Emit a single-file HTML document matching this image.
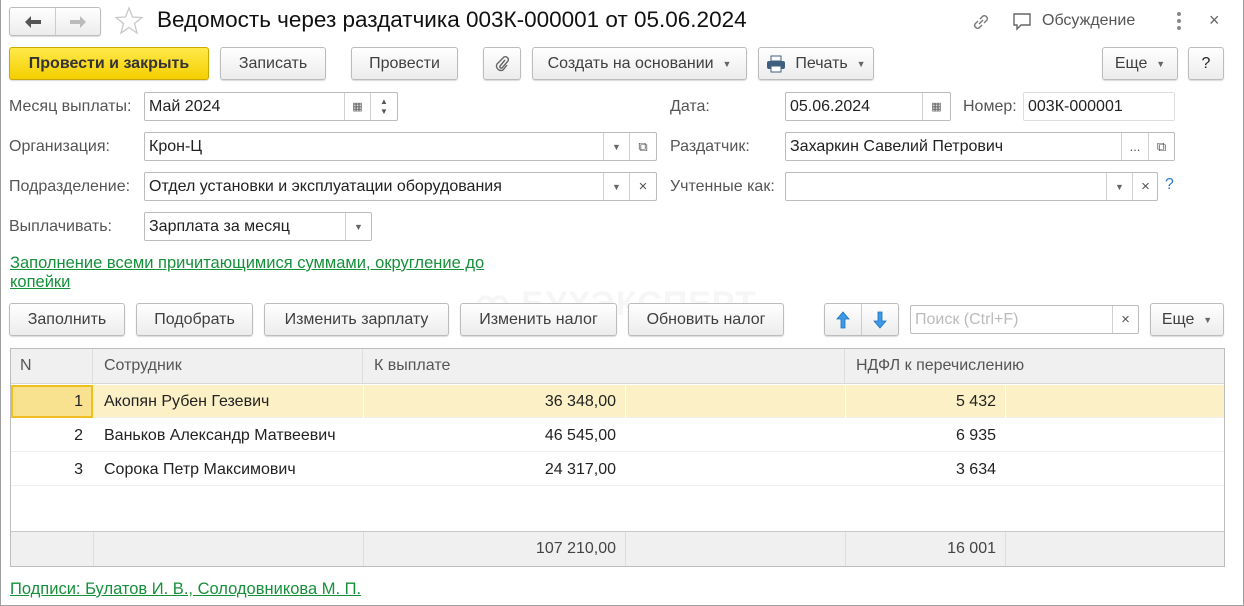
<!DOCTYPE html><html><head><meta charset="utf-8"><style>
*{box-sizing:border-box;margin:0;padding:0}
body{width:1244px;height:606px;background:#fff;font-family:"Liberation Sans",Arial,sans-serif;font-size:16px;color:#333;position:relative;overflow:hidden}
.frame{position:absolute;left:0;top:0;width:1244px;height:606px;border:1px solid #a0a0a0;border-top:none}
.a{position:absolute;white-space:nowrap}
.btn{position:absolute;height:33px;border:1px solid #bcbcbc;border-radius:3px;background:linear-gradient(#fff,#ececec);box-shadow:0 1px 1px rgba(0,0,0,.15);display:flex;align-items:center;justify-content:center;color:#404040;font-size:16px}
.inp{position:absolute;height:29px;border:1px solid #bcbcbc;border-radius:2px;background:#fff;display:flex;align-items:center;padding-left:4px;color:#222}
.seg{position:absolute;top:0;height:27px;border-left:1px solid #d0d0d0;display:flex;align-items:center;justify-content:center;font-size:11px;color:#555}
.lbl{position:absolute;color:#555}
.tri{font-size:9px;color:#666}
.link{position:absolute;color:#16903a;text-decoration:underline;font-size:16.5px}
.cell{position:absolute;height:34px;display:flex;align-items:center;border-right:1px solid #ddd}
</style></head><body>
<div class="frame"></div>
<!-- nav -->
<div class="btn" style="left:9px;top:7px;width:92px;height:29px;padding:0"><span style="width:46px;display:flex;justify-content:center"><svg width="18" height="14" viewBox="0 0 18 14"><path d="M1 7l6-6v4h10v4H7v4z" fill="#555"/></svg></span><span style="width:1px;height:27px;background:#ccc"></span><span style="width:45px;display:flex;justify-content:center"><svg width="18" height="14" viewBox="0 0 18 14"><path d="M17 7l-6-6v4H1v4h10v4z" fill="#bbb"/></svg></span></div>
<svg class="a" style="left:114px;top:6px" width="30" height="30" viewBox="0 0 30 30"><polygon points="15,2 18.5,11 28,11.5 20.5,17.5 23,27 15,21.5 7,27 9.5,17.5 2,11.5 11.5,11" fill="none" stroke="#c8c8c8" stroke-width="1.3"/></svg>
<div class="a" style="left:157px;top:7px;font-size:22.5px;color:#111">Ведомость через раздатчика 003К-000001 от 05.06.2024</div>
<svg class="a" style="left:970px;top:11px" width="22" height="22" viewBox="0 0 22 22" fill="none" stroke="#777" stroke-width="1.4"><path d="M9 13l4-4M8 10l-3 3a3 3 0 004 4l3-3M14 12l3-3a3 3 0 00-4-4l-3 3"/></svg>
<svg class="a" style="left:1012px;top:11px" width="22" height="22" viewBox="0 0 22 22" fill="none" stroke="#666" stroke-width="1.4"><path d="M2 3h16v11h-9l-4 4v-4H2z"/></svg>
<div class="a" style="left:1042px;top:12px;color:#555">Обсуждение</div>
<div class="a" style="left:1177px;top:12px;width:4px;height:18px;"><div style="width:4px;height:4px;background:#888;border-radius:2px;margin-bottom:3px"></div><div style="width:4px;height:4px;background:#888;border-radius:2px;margin-bottom:3px"></div><div style="width:4px;height:4px;background:#888;border-radius:2px"></div></div>
<div class="a" style="left:1209px;top:10px;color:#666;font-size:18px">×</div>
<!-- toolbar -->
<div class="btn" style="left:9px;top:47px;width:200px;background:linear-gradient(#ffe94a,#f4cf00);border-color:#c9a800;color:#333;font-weight:bold">Провести и закрыть</div>
<div class="btn" style="left:220px;top:47px;width:106px">Записать</div>
<div class="btn" style="left:351px;top:47px;width:107px">Провести</div>
<div class="btn" style="left:483px;top:47px;width:38px"><svg width="16" height="18" viewBox="0 0 16 18" fill="none" stroke="#666" stroke-width="1.4"><path d="M11 5l-5 6a1.5 1.5 0 002 2l6-7a3 3 0 00-4-4L3 9a4.5 4.5 0 006 6l4-5"/></svg></div>
<div class="btn" style="left:532px;top:47px;width:215px">Создать на основании&nbsp;&nbsp;<span class="tri">▼</span></div>
<div class="btn" style="left:758px;top:47px;width:116px"><svg width="20" height="18" viewBox="0 0 20 18"><rect x="5" y="1" width="10" height="5" fill="#fff" stroke="#3f5f80"/><rect x="1" y="6" width="18" height="8" rx="2" fill="#3f5f80"/><rect x="5" y="11" width="10" height="6" fill="#fff" stroke="#3f5f80"/></svg>&nbsp;&nbsp;Печать&nbsp;&nbsp;<span class="tri">▼</span></div>
<div class="btn" style="left:1102px;top:47px;width:76px">Еще&nbsp;&nbsp;<span class="tri">▼</span></div>
<div class="btn" style="left:1188px;top:47px;width:36px;color:#222">?</div>
<!-- fields -->
<div class="lbl" style="left:9px;top:98px">Месяц выплаты:</div>
<div class="inp" style="left:144px;top:92px;width:254px">Май 2024
 <div class="seg" style="left:199px;width:26px">▦</div><div class="seg" style="left:225px;width:27px;flex-direction:column;font-size:8px;line-height:10px"><span>▲</span><span>▼</span></div></div>
<div class="lbl" style="left:670px;top:98px">Дата:</div>
<div class="inp" style="left:785px;top:92px;width:166px">05.06.2024<div class="seg" style="left:136px;width:28px">▦</div></div>
<div class="lbl" style="left:963px;top:98px">Номер:</div>
<div class="inp" style="left:1023px;top:92px;width:152px;border-color:#ddd">003К-000001</div>

<div class="lbl" style="left:9px;top:138px">Организация:</div>
<div class="inp" style="left:144px;top:132px;width:513px">Крон-Ц<div class="seg" style="left:458px;width:26px"><span class="tri">▼</span></div><div class="seg" style="left:484px;width:27px;font-size:13px">⧉</div></div>
<div class="lbl" style="left:670px;top:138px">Раздатчик:</div>
<div class="inp" style="left:785px;top:132px;width:390px">Захаркин Савелий Петрович<div class="seg" style="left:335px;width:27px;font-size:13px">...</div><div class="seg" style="left:362px;width:26px;font-size:13px">⧉</div></div>

<div class="lbl" style="left:9px;top:178px">Подразделение:</div>
<div class="inp" style="left:144px;top:172px;width:513px">Отдел установки и эксплуатации оборудования<div class="seg" style="left:458px;width:26px"><span class="tri">▼</span></div><div class="seg" style="left:484px;width:27px;font-size:15px">×</div></div>
<div class="lbl" style="left:670px;top:178px">Учтенные как:</div>
<div class="inp" style="left:785px;top:172px;width:373px"><div class="seg" style="left:320px;width:26px"><span class="tri">▼</span></div><div class="seg" style="left:346px;width:26px;font-size:15px">×</div></div>
<div class="a" style="left:1165px;top:176px;color:#2a7bd0;font-size:16px">?</div>

<div class="lbl" style="left:9px;top:218px">Выплачивать:</div>
<div class="inp" style="left:144px;top:212px;width:228px">Зарплата за месяц<div class="seg" style="left:200px;width:26px"><span class="tri">▼</span></div></div>

<div class="link" style="left:10px;top:254px;line-height:19px">Заполнение всеми причитающимися суммами, округление до<br>копейки</div>
<div class="a" style="left:475px;top:284px;font-size:34px;font-weight:bold;color:#f6f6f6;letter-spacing:1px">ꝏ БУХЭКСПЕРТ</div>
<!-- table toolbar -->
<div class="btn" style="left:9px;top:303px;width:116px">Заполнить</div>
<div class="btn" style="left:136px;top:303px;width:117px">Подобрать</div>
<div class="btn" style="left:264px;top:303px;width:185px">Изменить зарплату</div>
<div class="btn" style="left:460px;top:303px;width:157px">Изменить налог</div>
<div class="btn" style="left:628px;top:303px;width:156px">Обновить налог</div>
<div class="btn" style="left:824px;top:303px;width:75px;padding:0"><span style="width:37px;display:flex;justify-content:center"><svg width="14" height="18" viewBox="0 0 14 18"><path d="M7 1l6 7H9v9H5V8H1z" fill="#3b9be8" stroke="#1f6fb8" stroke-width=".8"/></svg></span><span style="width:1px;height:31px;background:#ccc"></span><span style="width:37px;display:flex;justify-content:center"><svg width="14" height="18" viewBox="0 0 14 18"><path d="M7 17l6-7H9V1H5v9H1z" fill="#3b9be8" stroke="#1f6fb8" stroke-width=".8"/></svg></span></div>
<div class="inp" style="left:910px;top:305px;width:229px;color:#bbb">Поиск (Ctrl+F)<div class="seg" style="left:201px;width:26px;font-size:15px">×</div></div>
<div class="btn" style="left:1150px;top:303px;width:74px">Еще&nbsp;&nbsp;<span class="tri">▼</span></div>
<!-- table -->
<div class="a" style="left:10px;top:348px;width:1215px;height:219px;border:1px solid #bdbdbd"></div>
<div class="a" style="left:11px;top:349px;width:1213px;height:35px;background:#f0f0f0;border-bottom:1px solid #d8d8d8"></div>
<div class="cell" style="left:11px;top:349px;width:82px;padding-left:9px;color:#555">N</div>
<div class="cell" style="left:93px;top:349px;width:270px;padding-left:11px;color:#555">Сотрудник</div>
<div class="cell" style="left:363px;top:349px;width:482px;padding-left:11px;color:#555">К выплате</div>
<div class="cell" style="left:845px;top:349px;width:379px;padding-left:11px;color:#555;border:none">НДФЛ к перечислению</div>
<!-- rows -->
<div class="a" style="left:11px;top:385px;width:1213px;height:33px;background:#fbf0c6;border-bottom:1px solid #eee"></div>
<div class="a" style="left:11px;top:385px;width:82px;height:33px;background:#f9e28f;border:2px solid #f0c020"></div>
<div class="a" style="left:11px;top:418px;width:1213px;height:34px;border-bottom:1px solid #eee"></div>
<div class="a" style="left:11px;top:452px;width:1213px;height:34px;border-bottom:1px solid #eee"></div>
<div class="a" style="left:363px;top:385px;width:1px;height:33px;background:#fff"></div>
<div class="a" style="left:625px;top:385px;width:1px;height:33px;background:#fff"></div>
<div class="a" style="left:845px;top:385px;width:1px;height:33px;background:#fff"></div>
<div class="a" style="left:1005px;top:385px;width:1px;height:33px;background:#fff"></div>

<div class="a" style="left:11px;top:393px;width:72px;text-align:right;color:#222">1</div>
<div class="a" style="left:104px;top:393px;color:#222">Акопян Рубен Гезевич</div>
<div class="a" style="left:363px;top:393px;width:253px;text-align:right;color:#222">36 348,00</div>
<div class="a" style="left:845px;top:393px;width:151px;text-align:right;color:#222">5 432</div>

<div class="a" style="left:11px;top:427px;width:72px;text-align:right;color:#222">2</div>
<div class="a" style="left:104px;top:427px;color:#222">Ваньков Александр Матвеевич</div>
<div class="a" style="left:363px;top:427px;width:253px;text-align:right;color:#222">46 545,00</div>
<div class="a" style="left:845px;top:427px;width:151px;text-align:right;color:#222">6 935</div>

<div class="a" style="left:11px;top:461px;width:72px;text-align:right;color:#222">3</div>
<div class="a" style="left:104px;top:461px;color:#222">Сорока Петр Максимович</div>
<div class="a" style="left:363px;top:461px;width:253px;text-align:right;color:#222">24 317,00</div>
<div class="a" style="left:845px;top:461px;width:151px;text-align:right;color:#222">3 634</div>
<!-- footer -->
<div class="a" style="left:11px;top:531px;width:1213px;height:35px;background:#f0f0f0;border-top:1px solid #c8c8c8"></div>
<div class="a" style="left:93px;top:532px;width:1px;height:34px;background:#ddd"></div>
<div class="a" style="left:363px;top:532px;width:1px;height:34px;background:#ddd"></div>
<div class="a" style="left:625px;top:532px;width:1px;height:34px;background:#ddd"></div>
<div class="a" style="left:845px;top:532px;width:1px;height:34px;background:#ddd"></div>
<div class="a" style="left:1005px;top:532px;width:1px;height:34px;background:#ddd"></div>
<div class="a" style="left:363px;top:540px;width:253px;text-align:right;color:#444">107 210,00</div>
<div class="a" style="left:845px;top:540px;width:151px;text-align:right;color:#444">16 001</div>

<div class="link" style="left:10px;top:580px">Подписи: Булатов И. В., Солодовникова М. П.</div>
</body></html>
